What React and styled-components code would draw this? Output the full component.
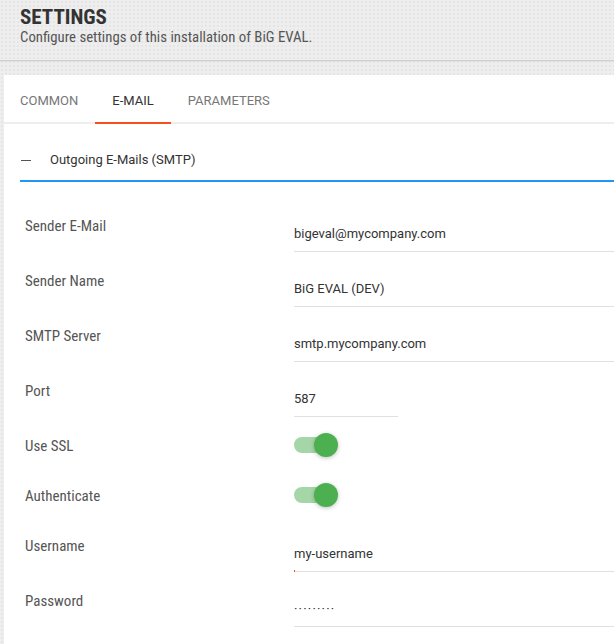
import React from "react";
import styled, { createGlobalStyle } from "styled-components";

const GlobalStyle = createGlobalStyle`
  html, body { margin: 0; padding: 0; }
  body {
    background-color: #eeeeee;
    background-image: radial-gradient(#e5e5e5 0.8px, transparent 0.9px);
    background-size: 4px 4px;
    font-family: Roboto, "Noto Sans", sans-serif;
    overflow: hidden;
  }
`;

const Page = styled.div`
  width: 614px;
  height: 644px;
  display: flex;
  flex-direction: column;
`;

const Header = styled.header`
  padding: 5px 20px 15px;
  border-bottom: 1px solid #cfcfcf;
  box-shadow: 0 1px 0 #e2e2e2;
`;

const Title = styled.h1`
  margin: 0;
  font-family: "Roboto Condensed", Roboto, sans-serif;
  font-weight: 700;
  font-size: 21px;
  line-height: 24px;
  color: #333;
`;

const Subtitle = styled.p`
  margin: 0;
  font-family: "Roboto Condensed", Roboto, sans-serif;
  font-size: 14.8px;
  line-height: 16px;
  color: #555;
`;

const Card = styled.main`
  flex: 1;
  margin: 14px 0 0 4px;
  background: #fff;
`;

const TabBar = styled.nav`
  display: flex;
  border-bottom: 2px solid #eeeeee;
`;

const Tab = styled.div`
  padding: 5px 17px 0 ${p => (p.$first ? 16 : 17)}px;
  line-height: 42px;
  margin-bottom: -2px;
  border-bottom: 2px solid ${p => (p.$active ? "#f4511e" : "transparent")};
  font-size: 13px;
  color: ${p => (p.$active ? "#333" : "#777")};
  text-transform: uppercase;
`;

const Section = styled.section`
  padding-left: 16px;
`;

const SectionHeader = styled.div`
  margin-top: 14px;
  height: 42px;
  display: flex;
  align-items: center;
  border-bottom: 2px solid #2196f3;
`;

const CollapseMark = styled.span`
  width: 10px;
  height: 1px;
  margin: 2px 19px 0 1px;
  background: #555;
`;

const SectionTitle = styled.span`
  font-size: 13px;
  color: #333;
`;

const Rows = styled.div`
  padding-top: 24px;
  display: flex;
  flex-direction: column;
`;

const Row = styled.div`
  display: grid;
  grid-template-columns: 269px 1fr;
  height: ${p => (p.$toggle ? 50 : 55)}px;
  padding-left: 5px;
`;

const Label = styled.div`
  padding-top: 12px;
  line-height: 16px;
  font-family: "Roboto Condensed", Roboto, sans-serif;
  font-size: 15px;
  color: #555;
`;

const Field = styled.div`
  position: relative;
  box-sizing: border-box;
  height: 46px;
  width: ${p => p.$width || "auto"};
  padding: 20px 0 9px;
  line-height: 16px;
  font-size: 13px;
  color: #333;
  border-bottom: 1px solid #e0e0e0;
  white-space: nowrap;
  ${p =>
    p.$focus &&
    `&::after {
      content: "";
      position: absolute;
      left: 0;
      bottom: -1px;
      width: 1px;
      height: 2px;
      background: #f4511e;
    }`}
`;

const Dots = styled.span`
  letter-spacing: 1.2px;
`;

const ToggleCell = styled.div`
  padding-top: 11px;
`;

const Track = styled.div`
  position: relative;
  width: 36px;
  height: 16px;
  border-radius: 8px;
  background: #a5d6a7;
`;

const Thumb = styled.div`
  position: absolute;
  left: 20px;
  top: -4px;
  width: 24px;
  height: 24px;
  border-radius: 50%;
  background: #4caf50;
  box-shadow: 0 1px 4px rgba(0, 0, 0, 0.25);
`;

const Toggle = () => (
  <ToggleCell>
    <Track>
      <Thumb />
    </Track>
  </ToggleCell>
);

export default function App() {
  return (
    <Page>
      <GlobalStyle />
      <Header>
        <Title>SETTINGS</Title>
        <Subtitle>Configure settings of this installation of BiG EVAL.</Subtitle>
      </Header>
      <Card>
        <TabBar>
          <Tab $first>Common</Tab>
          <Tab $active>E-Mail</Tab>
          <Tab>Parameters</Tab>
        </TabBar>
        <Section>
          <SectionHeader>
            <CollapseMark />
            <SectionTitle>Outgoing E-Mails (SMTP)</SectionTitle>
          </SectionHeader>
          <Rows>
            <Row>
              <Label>Sender E-Mail</Label>
              <Field>bigeval@mycompany.com</Field>
            </Row>
            <Row>
              <Label>Sender Name</Label>
              <Field>BiG EVAL (DEV)</Field>
            </Row>
            <Row>
              <Label>SMTP Server</Label>
              <Field>smtp.mycompany.com</Field>
            </Row>
            <Row>
              <Label>Port</Label>
              <Field $width="104px">587</Field>
            </Row>
            <Row $toggle>
              <Label>Use SSL</Label>
              <Toggle />
            </Row>
            <Row $toggle>
              <Label>Authenticate</Label>
              <Toggle />
            </Row>
            <Row>
              <Label>Username</Label>
              <Field $focus>my-username</Field>
            </Row>
            <Row>
              <Label>Password</Label>
              <Field>
                <Dots>·········</Dots>
              </Field>
            </Row>
          </Rows>
        </Section>
      </Card>
    </Page>
  );
}
